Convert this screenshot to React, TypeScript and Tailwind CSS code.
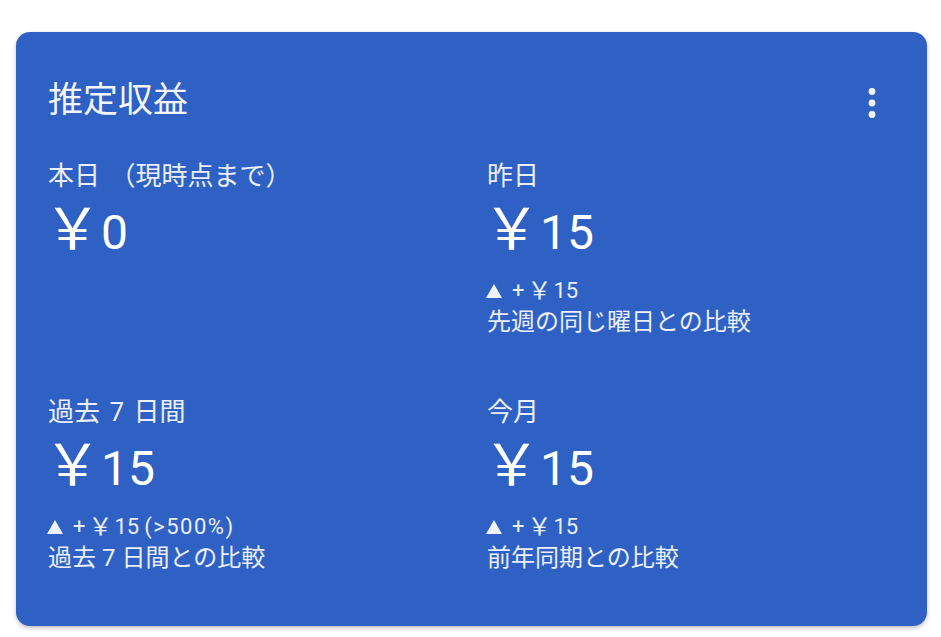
const STATS = [
  { label: "本日 （現時点まで）", amount: "0", delta: null, extra: null, note: null },
  { label: "昨日", amount: "15", delta: "15", extra: null, note: "先週の同じ曜日との比較" },
  { label: "過去 7 日間", amount: "15", delta: "15", extra: "(>500%)", note: "過去 7 日間との比較" },
  { label: "今月", amount: "15", delta: "15", extra: null, note: "前年同期との比較" },
];

function MoreIcon() {
  return (
    <svg width="14" height="32" viewBox="0 0 14 32" className="mr-[16px] mt-[4px]">
      <circle cx="7" cy="4.5" r="3.4" fill="#f2f5fc" />
      <circle cx="7" cy="16" r="3.4" fill="#f2f5fc" />
      <circle cx="7" cy="27.5" r="3.4" fill="#f2f5fc" />
    </svg>
  );
}

function UpTriangle() {
  return (
    <svg width="16" height="14" viewBox="0 0 16 14" className="block shrink-0 -ml-[1px]">
      <path d="M8 0 L16 14 L0 14 Z" fill="#eef2fb" />
    </svg>
  );
}

export default function App() {
  return (
    <div
      className="min-h-screen bg-white pt-[32px] pl-[16px] pr-[14px]"
      style={{ fontFamily: 'Roboto, "Noto Sans CJK JP", sans-serif' }}
    >
      <div className="rounded-[14px] bg-[#2f60c4] px-[32px] pt-[47px] pb-[53px] text-white shadow-[0_2px_4px_rgba(0,0,0,0.25)]">
        {/* Header */}
        <div className="flex items-center justify-between">
          <h1 className="text-[35px] leading-[44px] font-normal text-white/95">推定収益</h1>
          <MoreIcon />
        </div>

        {/* Stats grid */}
        <div className="mt-[37px] grid grid-cols-[439px_1fr] gap-y-[59px]">
          {STATS.map((s) => (
            <div key={s.label} className="flex flex-col">
              <div className="text-[26px] leading-[32px] text-white/90 [word-spacing:3px]">{s.label}</div>
              <div className="mt-[10px] flex h-[56px] items-baseline text-[48px] leading-[56px] text-white">
                <span className="-ml-[4px] text-[57px] leading-[56px]">￥</span>
                <span>{s.amount}</span>
              </div>
              {s.delta && (
                <>
                  <div className="mt-[21px] flex h-[24px] items-center text-[22px] leading-[24px] text-white/90">
                    <UpTriangle />
                    <span className="ml-[10px]">+</span>
                    <span className="ml-[3px] text-[24px]">￥</span>
                    <span className="ml-[2px]">{s.delta}</span>
                    {s.extra && <span className="ml-[5px] tracking-[1.5px]">{s.extra}</span>}
                  </div>
                  <div className="mt-[4px] text-[24px] leading-[30px] text-white/90">{s.note}</div>
                </>
              )}
            </div>
          ))}
        </div>
      </div>
    </div>
  );
}
